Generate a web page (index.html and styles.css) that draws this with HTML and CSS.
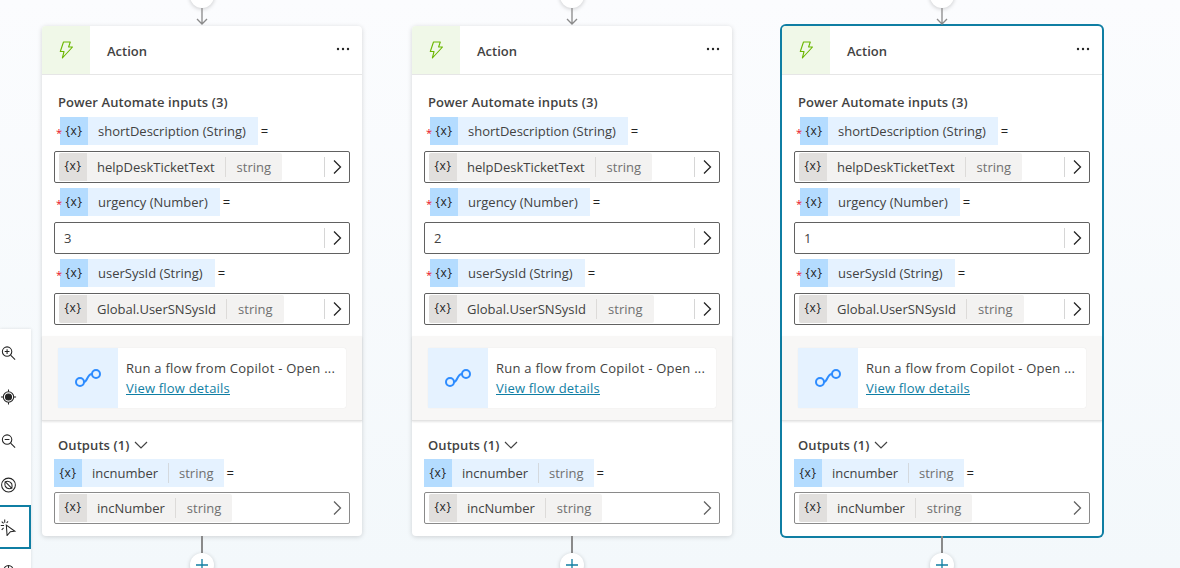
FILE: index.html
```html
<!DOCTYPE html>
<html lang="en">
<head>
    <meta charset="UTF-8">
    <title>Action nodes</title>
    <link rel="stylesheet" href="styles.css">
</head>
<body>
    <svg class="defs" width="0" height="0">
        <symbol id="bolt" viewBox="0 0 16 20"><path d="M5.500 2h6.800l-1.700 5h3.900L4.400 18l1.600-6.500H2.300z" fill="none" stroke="currentColor" stroke-width="1.100" stroke-linejoin="round"/></symbol>
        <symbol id="flow" viewBox="0 0 28 20"><circle cx="6" cy="14" r="4" fill="none" stroke="currentColor" stroke-width="2"/><circle cx="22" cy="6" r="4" fill="none" stroke="currentColor" stroke-width="2"/><path d="M10 14c3.500 0 3-8 8-8" fill="none" stroke="currentColor" stroke-width="2"/></symbol>
        <symbol id="chev-right" viewBox="0 0 12 16"><path d="M3 1.500 9.500 8 3 14.500" fill="none" stroke="currentColor" stroke-width="1.300"/></symbol>
        <symbol id="chev-down" viewBox="0 0 16 10"><path d="M2 2l6 6 6-6" fill="none" stroke="currentColor" stroke-width="1.200"/></symbol>
        <symbol id="plus" viewBox="0 0 12 12"><path d="M6 0v12M0 6h12" stroke="currentColor" stroke-width="1.300"/></symbol>
        <symbol id="arrow" viewBox="0 0 12 18"><path d="M6 0v16M1 11l5 5 5-5" fill="none" stroke="currentColor" stroke-width="1.300"/></symbol>
        <symbol id="dots" viewBox="0 0 14 4"><circle cx="2" cy="2" r="1.200"/><circle cx="7" cy="2" r="1.200"/><circle cx="12" cy="2" r="1.200"/></symbol>
    </svg>

    <div class="canvas">
        <div class="column">
            <div class="connector-top">
                <span class="circle"></span>
                <svg class="arrow"><use href="#arrow"/></svg>
            </div>
            <div class="card">
                <div class="card-head">
                    <div class="bolt-box"><svg class="bolt"><use href="#bolt"/></svg></div>
                    <div class="card-title">Action</div>
                    <svg class="more"><use href="#dots"/></svg>
                </div>
                <div class="inputs">
                    <div class="section-title">Power Automate inputs (3)</div>
                    <div class="param"><span class="star">*</span><span class="var-icon">{x}</span><span class="var-name">shortDescription (String)</span><span class="equals">=</span></div>
                    <div class="field"><div class="token"><span class="token-icon">{x}</span><span class="token-name">helpDeskTicketText</span><span class="token-type">string</span></div><div class="field-end"><svg class="chev"><use href="#chev-right"/></svg></div></div>
                    <div class="param"><span class="star">*</span><span class="var-icon">{x}</span><span class="var-name">urgency (Number)</span><span class="equals">=</span></div>
                    <div class="field"><div class="field-value">3</div><div class="field-end"><svg class="chev"><use href="#chev-right"/></svg></div></div>
                    <div class="param"><span class="star">*</span><span class="var-icon">{x}</span><span class="var-name">userSysId (String)</span><span class="equals">=</span></div>
                    <div class="field"><div class="token"><span class="token-icon">{x}</span><span class="token-name">Global.UserSNSysId</span><span class="token-type">string</span></div><div class="field-end"><svg class="chev"><use href="#chev-right"/></svg></div></div>
                </div>
                <div class="flow-section">
                    <div class="flow-card">
                        <div class="flow-icon"><svg class="flow"><use href="#flow"/></svg></div>
                        <div class="flow-text">
                            <div class="flow-name">Run a flow from Copilot - Open ...</div>
                            <a class="flow-link" href="#">View flow details</a>
                        </div>
                    </div>
                </div>
                <div class="outputs">
                    <div class="section-title">Outputs (1) <svg class="chev-down"><use href="#chev-down"/></svg></div>
                    <div class="param output"><span class="var-icon">{x}</span><span class="var-name">incnumber</span><span class="var-type">string</span><span class="equals">=</span></div>
                    <div class="field light"><div class="token"><span class="token-icon">{x}</span><span class="token-name">incNumber</span><span class="token-type">string</span></div><div class="field-end"><svg class="chev"><use href="#chev-right"/></svg></div></div>
                </div>
            </div>
            <div class="connector-bottom">
                <span class="line"></span>
                <span class="circle"><svg class="plus"><use href="#plus"/></svg></span>
            </div>
        </div>

        <div class="column">
            <div class="connector-top">
                <span class="circle"></span>
                <svg class="arrow"><use href="#arrow"/></svg>
            </div>
            <div class="card">
                <div class="card-head">
                    <div class="bolt-box"><svg class="bolt"><use href="#bolt"/></svg></div>
                    <div class="card-title">Action</div>
                    <svg class="more"><use href="#dots"/></svg>
                </div>
                <div class="inputs">
                    <div class="section-title">Power Automate inputs (3)</div>
                    <div class="param"><span class="star">*</span><span class="var-icon">{x}</span><span class="var-name">shortDescription (String)</span><span class="equals">=</span></div>
                    <div class="field"><div class="token"><span class="token-icon">{x}</span><span class="token-name">helpDeskTicketText</span><span class="token-type">string</span></div><div class="field-end"><svg class="chev"><use href="#chev-right"/></svg></div></div>
                    <div class="param"><span class="star">*</span><span class="var-icon">{x}</span><span class="var-name">urgency (Number)</span><span class="equals">=</span></div>
                    <div class="field"><div class="field-value">2</div><div class="field-end"><svg class="chev"><use href="#chev-right"/></svg></div></div>
                    <div class="param"><span class="star">*</span><span class="var-icon">{x}</span><span class="var-name">userSysId (String)</span><span class="equals">=</span></div>
                    <div class="field"><div class="token"><span class="token-icon">{x}</span><span class="token-name">Global.UserSNSysId</span><span class="token-type">string</span></div><div class="field-end"><svg class="chev"><use href="#chev-right"/></svg></div></div>
                </div>
                <div class="flow-section">
                    <div class="flow-card">
                        <div class="flow-icon"><svg class="flow"><use href="#flow"/></svg></div>
                        <div class="flow-text">
                            <div class="flow-name">Run a flow from Copilot - Open ...</div>
                            <a class="flow-link" href="#">View flow details</a>
                        </div>
                    </div>
                </div>
                <div class="outputs">
                    <div class="section-title">Outputs (1) <svg class="chev-down"><use href="#chev-down"/></svg></div>
                    <div class="param output"><span class="var-icon">{x}</span><span class="var-name">incnumber</span><span class="var-type">string</span><span class="equals">=</span></div>
                    <div class="field light"><div class="token"><span class="token-icon">{x}</span><span class="token-name">incNumber</span><span class="token-type">string</span></div><div class="field-end"><svg class="chev"><use href="#chev-right"/></svg></div></div>
                </div>
            </div>
            <div class="connector-bottom">
                <span class="line"></span>
                <span class="circle"><svg class="plus"><use href="#plus"/></svg></span>
            </div>
        </div>

        <div class="column">
            <div class="connector-top">
                <span class="circle"></span>
                <svg class="arrow"><use href="#arrow"/></svg>
            </div>
            <div class="card selected">
                <div class="card-head">
                    <div class="bolt-box"><svg class="bolt"><use href="#bolt"/></svg></div>
                    <div class="card-title">Action</div>
                    <svg class="more"><use href="#dots"/></svg>
                </div>
                <div class="inputs">
                    <div class="section-title">Power Automate inputs (3)</div>
                    <div class="param"><span class="star">*</span><span class="var-icon">{x}</span><span class="var-name">shortDescription (String)</span><span class="equals">=</span></div>
                    <div class="field"><div class="token"><span class="token-icon">{x}</span><span class="token-name">helpDeskTicketText</span><span class="token-type">string</span></div><div class="field-end"><svg class="chev"><use href="#chev-right"/></svg></div></div>
                    <div class="param"><span class="star">*</span><span class="var-icon">{x}</span><span class="var-name">urgency (Number)</span><span class="equals">=</span></div>
                    <div class="field"><div class="field-value">1</div><div class="field-end"><svg class="chev"><use href="#chev-right"/></svg></div></div>
                    <div class="param"><span class="star">*</span><span class="var-icon">{x}</span><span class="var-name">userSysId (String)</span><span class="equals">=</span></div>
                    <div class="field"><div class="token"><span class="token-icon">{x}</span><span class="token-name">Global.UserSNSysId</span><span class="token-type">string</span></div><div class="field-end"><svg class="chev"><use href="#chev-right"/></svg></div></div>
                </div>
                <div class="flow-section">
                    <div class="flow-card">
                        <div class="flow-icon"><svg class="flow"><use href="#flow"/></svg></div>
                        <div class="flow-text">
                            <div class="flow-name">Run a flow from Copilot - Open ...</div>
                            <a class="flow-link" href="#">View flow details</a>
                        </div>
                    </div>
                </div>
                <div class="outputs">
                    <div class="section-title">Outputs (1) <svg class="chev-down"><use href="#chev-down"/></svg></div>
                    <div class="param output"><span class="var-icon">{x}</span><span class="var-name">incnumber</span><span class="var-type">string</span><span class="equals">=</span></div>
                    <div class="field light"><div class="token"><span class="token-icon">{x}</span><span class="token-name">incNumber</span><span class="token-type">string</span></div><div class="field-end"><svg class="chev"><use href="#chev-right"/></svg></div></div>
                </div>
            </div>
            <div class="connector-bottom">
                <span class="line"></span>
                <span class="circle"><svg class="plus"><use href="#plus"/></svg></span>
            </div>
        </div>
    </div>

    <!-- floating zoom toolbar, sits over the canvas -->
    <div class="toolbar">
        <div class="tool">
            <svg width="18" height="18" viewBox="0 0 18 18" fill="none" stroke="#242424" stroke-width="1.100"><circle cx="7.500" cy="7.500" r="5"/><path d="M11.200 11.200 16 16M5 7.500h5M7.500 5v5"/></svg>
        </div>
        <div class="tool">
            <svg width="18" height="18" viewBox="0 0 18 18" fill="none" stroke="#242424" stroke-width="1.100"><circle cx="9" cy="9" r="5.500"/><circle cx="9" cy="9" r="3.200" fill="#242424"/><path d="M9 1v2.500M9 14.500V17M1 9h2.500M14.500 9H17"/></svg>
        </div>
        <div class="tool">
            <svg width="18" height="18" viewBox="0 0 18 18" fill="none" stroke="#242424" stroke-width="1.100"><circle cx="7.500" cy="7.500" r="5"/><path d="M11.200 11.200 16 16M5 7.500h5"/></svg>
        </div>
        <div class="tool">
            <svg width="18" height="18" viewBox="0 0 18 18" fill="none" stroke="#242424" stroke-width="1.100"><circle cx="9" cy="9" r="7.300"/><path d="M5.500 5.500 12.500 12.500M5.500 5.500c3-1 6 0 7 2.500.5 1.500.3 3 0 4.500-3 .8-6-.3-7-2.500-.5-1.500-.4-3 0-4.500z"/></svg>
        </div>
        <div class="tool active">
            <svg width="18" height="18" viewBox="0 0 18 18" fill="none" stroke="#242424" stroke-width="1.100"><path d="M6.700 7 15.700 13.500 11 14 7.500 18z"/><path d="M5 1v3.500M.8 7.500h3.500M1.800 3.200l2 2M8.500 3 7 4.800M1.800 12l2-2"/></svg>
        </div>
        <div class="tool">
            <svg width="18" height="18" viewBox="0 0 18 18" fill="none" stroke="#242424" stroke-width="1.100"><path d="M4 9V6a5 5 0 0 1 10 0v3M9 1v5"/></svg>
        </div>
    </div>
</body>
</html>
```

FILE: styles.css
```css
* {
    box-sizing: border-box;
}
html, body {
    margin: 0;
    height: 568px;
    overflow: hidden;
}
body {
    font-family: 'Open Sans', 'Noto Sans', sans-serif;
    font-size: 13px;
    color: #424242;
    background: linear-gradient(to bottom, #fbfcfe, #f3f8fb);
}
.defs {
    position: absolute;
}
.canvas {
    display: flex;
    gap: 50px;
    padding-left: 42px;
}
.column {
    width: 320px;
}

/* connectors */
.connector-top {
    height: 26px;
    display: flex;
    flex-direction: column;
    align-items: center;
}
.circle {
    display: flex;
    flex-shrink: 0;
    justify-content: center;
    width: 24px;
    height: 24px;
    border-radius: 50%;
    background-color: #fff;
    box-shadow: 0 1px 4px rgba(0,0,0,0.2);
}
.connector-top .circle {
    margin-top: -16px;
}
.arrow {
    width: 12px;
    height: 18px;
    color: #8a8a8a;
}
.connector-bottom {
    display: flex;
    flex-direction: column;
    align-items: center;
}
.line {
    width: 2px;
    height: 17px;
    background-color: #8a8a8a;
}
.plus {
    width: 12px;
    height: 12px;
    margin-top: 6px;
    color: #0f7ea3;
}

/* card */
.card {
    height: 510px;
    background-color: #fff;
    border-radius: 4px;
    box-shadow: 0 1px 5px rgba(0,0,0,0.16);
}
.card.selected {
    box-shadow: 0 0 0 2px #0f7ea3;
}
.card-head {
    display: flex;
    align-items: center;
    height: 49px;
    border-bottom: 1px solid #e6e6e6;
}
.bolt-box {
    display: flex;
    align-items: center;
    justify-content: center;
    width: 48px;
    height: 48px;
    background-color: #f0f8e8;
    border-top-left-radius: 4px;
}
.bolt {
    width: 16px;
    height: 20px;
    color: #6bb700;
}
.card-title {
    flex: 1;
    margin-left: 17px;
    margin-top: 2px;
    font-weight: 600;
    font-size: 13px;
}
.more {
    width: 14px;
    height: 4px;
    margin-right: 12px;
    margin-top: -2px;
    fill: #242424;
}

/* inputs */
.inputs {
    height: 261px;
    padding: 18px 12px 0;
}
.section-title {
    display: flex;
    align-items: center;
    gap: 4px;
    height: 18px;
    margin-left: 4px;
    font-weight: 600;
    font-size: 13px;
    letter-spacing: 0.08px;
}
.chev-down {
    width: 16px;
    height: 10px;
    color: #424242;
}
.param {
    position: relative;
    display: flex;
    align-items: center;
    height: 28px;
    margin: 5px 0 6px 6px;
}
.inputs .section-title + .param {
    margin-top: 6px;
}
.star {
    position: absolute;
    left: -4px;
    top: 9px;
    color: #e81123;
    font-size: 11px;
    line-height: 14px;
}
.var-icon {
    width: 28px;
    height: 28px;
    line-height: 27px;
    text-align: center;
    font-size: 12px;
    letter-spacing: 0.5px;
    color: #242424;
    background-color: #b4dcff;
}
.var-name {
    height: 28px;
    padding: 0 12px 0 10px;
    line-height: 29px;
    background-color: #e5f2ff;
}
.var-type {
    position: relative;
    height: 28px;
    padding: 0 10px 0 11px;
    line-height: 29px;
    color: #707070;
    background-color: #e5f2ff;
}
.var-type::before {
    content: "";
    position: absolute;
    left: 0;
    top: 4px;
    bottom: 4px;
    width: 1px;
    background-color: #d4d9de;
}
.output .var-name {
    padding-right: 10px;
}
.equals {
    margin-left: 3px;
    color: #242424;
}
.field {
    display: flex;
    align-items: center;
    height: 32px;
    border: 1px solid #616161;
    border-radius: 2px;
}
.field.light {
    border-color: #8a8a8a;
}
.field.light .field-end {
    border-left-color: transparent;
}
.field.light .chev {
    color: #616161;
}
.token {
    display: flex;
    align-items: center;
    height: 28px;
    margin-left: 4px;
    background-color: #f3f2f1;
    border-radius: 2px;
}
.token-icon {
    width: 28px;
    height: 28px;
    line-height: 26px;
    text-align: center;
    font-size: 12px;
    letter-spacing: 0.5px;
    color: #242424;
    background-color: #e1dfdd;
    border-radius: 2px 0 0 2px;
}
.token-name {
    padding: 0 10px;
    line-height: 20px;
    border-right: 1px solid #dddbd9;
}
.token-type {
    padding: 0 11px;
    color: #707070;
}
.field-value {
    margin-left: 9px;
    margin-top: -1px;
}
.field-end {
    display: flex;
    align-items: center;
    justify-content: center;
    margin-left: auto;
    width: 25px;
    height: 20px;
    border-left: 1px solid #d6d6d6;
}
.chev {
    width: 12px;
    height: 16px;
    color: #242424;
}

/* flow section */
.flow-section {
    height: 85px;
    padding: 12px 16px;
    background-color: #f8f7f6;
    border-bottom: 1px solid #e3e3e3;
    box-shadow: 0 1px 2px rgba(0,0,0,0.1);
}
.flow-card {
    display: flex;
    height: 60px;
    background-color: #fff;
    border-radius: 2px;
    box-shadow: 0 0 1px rgba(0,0,0,0.12);
}
.flow-icon {
    display: flex;
    align-items: center;
    justify-content: center;
    width: 60px;
    background-color: #e5f2ff;
}
.flow {
    width: 28px;
    height: 20px;
    color: #2d8cff;
}
.flow-text {
    padding: 10px 0 0 8px;
    line-height: 20px;
}
.flow-name {
    letter-spacing: 0.25px;
}
.flow-link {
    color: #0f7ea3;
    letter-spacing: 0.2px;
}

/* outputs */
.outputs {
    padding: 15px 12px 0;
}
.param.output {
    margin-left: 0;
    margin-bottom: 5px;
}

/* toolbar */
.toolbar {
    position: absolute;
    left: 0;
    top: 329px;
    width: 31px;
    height: 260px;
    padding-top: 2px;
    background-color: #fff;
    box-shadow: 0 0 3px rgba(0,0,0,0.12);
}
.tool {
    display: flex;
    align-items: center;
    justify-content: center;
    width: 31px;
    height: 44px;
    padding-right: 14px;
}
.tool.active {
    margin-top: -2px;
    margin-bottom: 2px;
    border: 2px solid #0f7ea3;
    border-left: none;
    padding-right: 12px;
}
```
